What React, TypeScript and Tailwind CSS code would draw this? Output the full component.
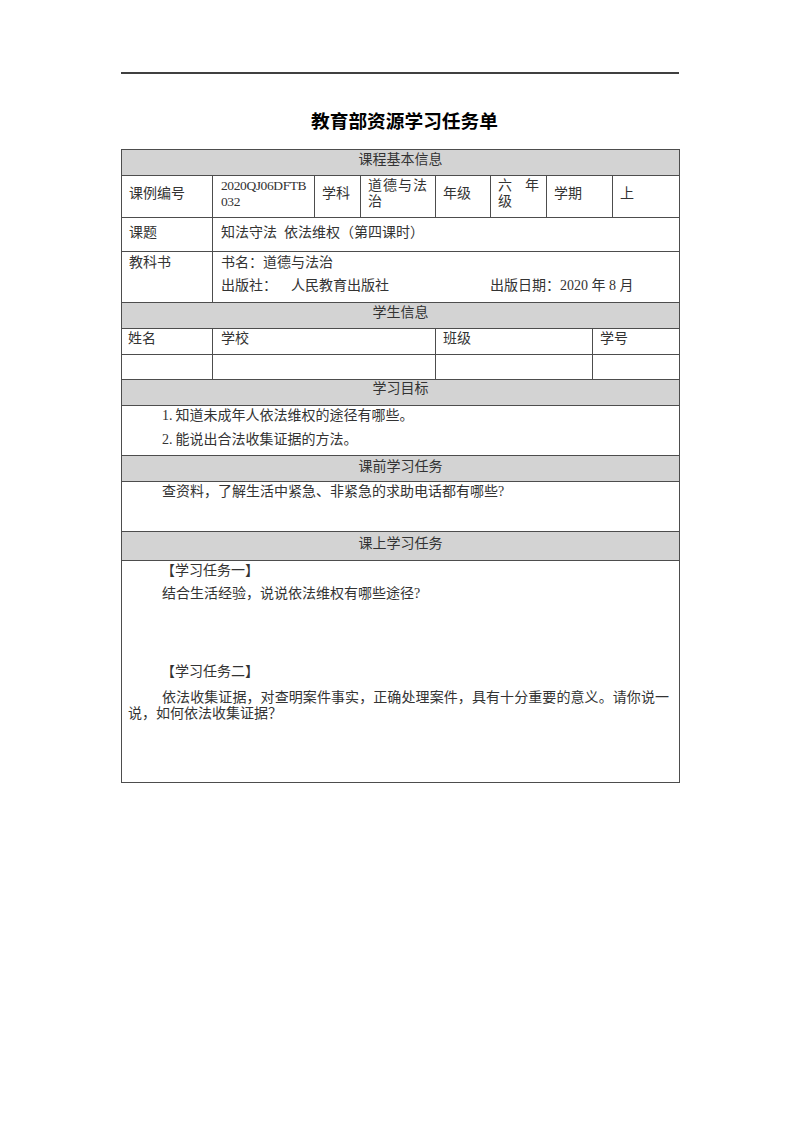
const FONT = '"Liberation Serif", "Noto Sans CJK SC", serif';

/* 表头灰条 */
function Band({ children, h, pt }: { children: React.ReactNode; h: string; pt: string }) {
  return (
    <div className={`flex justify-center border-b border-[#4d4d4d] bg-[#d3d3d3] leading-[16px] ${h} ${pt}`}>
      {children}
    </div>
  );
}

export default function App() {
  return (
    <div className="min-h-[1132px] w-[800px] bg-white pl-[121px] pt-[72px] text-[14px] text-[#333]" style={{ fontFamily: FONT }}>
      {/* top rule */}
      <div className="h-[2px] w-[558px] bg-[#404040]" />

      <h1 className="mt-[34px] w-[559px] pl-[8px] text-center text-[18.7px] font-bold leading-[28px] text-black">
        教育部资源学习任务单
      </h1>

      <div className="mt-[13px] w-[559px] border border-[#4d4d4d]">
        <Band h="h-[26px]" pt="pt-[2px]">课程基本信息</Band>

        {/* 课例编号 row */}
        <div className="flex h-[42px] border-b border-[#4d4d4d] leading-[16px]">
          <div className="flex w-[91px] items-center border-r border-[#4d4d4d] pb-[5px] pl-[7px]">课例编号</div>
          <div className="flex w-[102px] items-center border-r border-[#4d4d4d] pb-[5px] pl-[8px] text-[13.5px] tracking-[-0.4px]">
            <span>
              2020QJ06DFTB
              <br />
              032
            </span>
          </div>
          <div className="flex w-[46px] items-center border-r border-[#4d4d4d] pb-[5px] pl-[7px]">学科</div>
          <div className="flex w-[75px] items-center border-r border-[#4d4d4d] pb-[5px] pl-[7px] tracking-[1px]">
            <span>
              道德与法
              <br />
              治
            </span>
          </div>
          <div className="flex w-[55px] items-center border-r border-[#4d4d4d] pb-[5px] pl-[7px]">年级</div>
          <div className="flex w-[56px] flex-col justify-center border-r border-[#4d4d4d] px-[7px] pb-[5px]">
            <div className="flex justify-between">
              <span>六</span>
              <span>年</span>
            </div>
            <span>级</span>
          </div>
          <div className="flex w-[66px] items-center border-r border-[#4d4d4d] pb-[5px] pl-[7px]">学期</div>
          <div className="flex flex-1 items-center pb-[5px] pl-[7px]">上</div>
        </div>

        {/* 课题 */}
        <div className="flex h-[34px] border-b border-[#4d4d4d] leading-[16px]">
          <div className="flex w-[91px] items-center border-r border-[#4d4d4d] pb-[4px] pl-[7px]">课题</div>
          <div className="flex flex-1 items-center pb-[4px] pl-[8px]">
            知法守法<span className="ml-[7px]">依法维权（第四课时）</span>
          </div>
        </div>

        {/* 教科书 */}
        <div className="flex h-[51px] border-b border-[#4d4d4d] leading-[16px]">
          <div className="w-[91px] border-r border-[#4d4d4d] pl-[7px] pt-[3px]">教科书</div>
          <div className="flex-1 pl-[8px] pt-[3px]">
            <div>书名：道德与法治</div>
            <div className="mt-[7px] flex">
              <span className="w-[269px]">
                出版社：<span className="ml-[14px]">人民教育出版社</span>
              </span>
              <span>出版日期：2020 年 8 月</span>
            </div>
          </div>
        </div>

        <Band h="h-[26px]" pt="pt-[2px]">学生信息</Band>

        {/* 学生信息 */}
        <div className="flex h-[26px] border-b border-[#4d4d4d] leading-[16px]">
          <div className="w-[91px] border-r border-[#4d4d4d] pl-[6px] pt-[2px]">姓名</div>
          <div className="w-[223px] border-r border-[#4d4d4d] pl-[8px] pt-[2px]">学校</div>
          <div className="w-[157px] border-r border-[#4d4d4d] pl-[7px] pt-[2px]">班级</div>
          <div className="flex-1 pl-[7px] pt-[2px]">学号</div>
        </div>
        <div className="flex h-[25px] border-b border-[#4d4d4d]">
          <div className="w-[91px] border-r border-[#4d4d4d]" />
          <div className="w-[223px] border-r border-[#4d4d4d]" />
          <div className="w-[157px] border-r border-[#4d4d4d]" />
          <div className="flex-1" />
        </div>

        <Band h="h-[26px]" pt="pt-[1px]">学习目标</Band>

        <div className="h-[50px] border-b border-[#4d4d4d] pl-[40px] pt-[2px] leading-[16px]">
          <p>
            1.<span className="ml-[3px]">知道未成年人依法维权的途径有哪些。</span>
          </p>
          <p className="mt-[8px]">
            2.<span className="ml-[3px]">能说出合法收集证据的方法。</span>
          </p>
        </div>

        <Band h="h-[26px]" pt="pt-[3px]">课前学习任务</Band>

        <div className="h-[50px] border-b border-[#4d4d4d] pl-[40px] pt-[2px] leading-[16px]">
          <p>查资料，了解生活中紧急、非紧急的求助电话都有哪些?</p>
        </div>

        <Band h="h-[29px]" pt="pt-[4px]">课上学习任务</Band>

        <div className="h-[221px] pl-[6px] pr-[10px] pt-[2px] leading-[16px]">
          <p className="pl-[33px]">【学习任务一】</p>
          <p className="mt-[7px] pl-[34px]">结合生活经验，说说依法维权有哪些途径?</p>
          <p className="mt-[62px] pl-[33px]">【学习任务二】</p>
          <p className="mt-[10px]">
            <span className="block indent-[34px] [text-align-last:justify]">
              依法收集证据，对查明案件事实，正确处理案件，具有十分重要的意义。请你说一
            </span>
            <span className="block">说，如何依法收集证据？</span>
          </p>
        </div>
      </div>
    </div>
  );
}
